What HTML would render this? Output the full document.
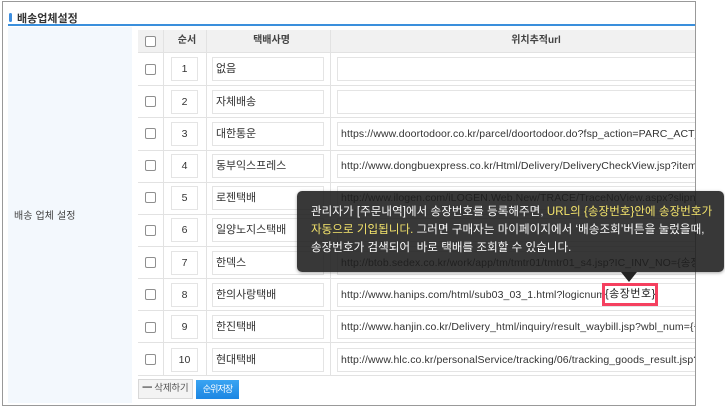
<!DOCTYPE html>
<html><head><meta charset="utf-8">
<style>
html,body{margin:0;padding:0;background:#fff}
#p{position:relative;width:725px;height:406px;overflow:hidden;background:#fff;font-family:"Liberation Sans","Noto Sans CJK KR",sans-serif;color:#333;font-size:11px;filter:blur(.3px)}
#p div{position:absolute;box-sizing:border-box}
.i{background:#fff;border:1px solid #e4e4e4;height:24px;line-height:22px;white-space:nowrap;overflow:hidden}
.s{left:171px;width:27px;text-align:center;font-size:10.5px}
.n{left:212px;width:112px;padding-left:3px;font-size:11px;letter-spacing:-.1px}
.u{left:337px;width:358px;padding-left:3px;font-size:10.5px;letter-spacing:.1px;border-right:0}
.c{left:145px;width:11px;height:11px;border:1px solid #8f8f8f;border-radius:2px;background:#fff}
.l{left:138px;width:557px;height:1px;background:#e2e2e2}
.t{line-height:22px;height:22px;top:30px;text-align:center;font-size:10px;color:#444;font-weight:bold}
.m{left:14px;width:420px;color:#fff;font-size:11.5px;line-height:20px;white-space:nowrap;letter-spacing:.07px}
.m span{color:#f4e46c}
</style></head><body>
<div id="p">
<div style="left:2px;top:1px;width:694px;height:405px;border:1px solid #999"></div>
<div style="left:9px;top:13px;width:3px;height:9px;background:#3d8ee0;border-radius:2px"></div>
<div style="left:17px;top:10px;font-size:11px;font-weight:bold;color:#333;white-space:nowrap">배송업체설정</div>
<div style="left:8px;top:24px;width:687px;height:2px;background:#3a8fdc"></div>
<div style="left:8px;top:27px;width:124px;height:376px;background:#f3f8fd"></div>
<div style="left:14px;top:207px;font-size:10px;color:#444;white-space:nowrap;letter-spacing:.1px">배송 업체 설정</div>

<div style="left:138px;top:30px;width:557px;height:23px;background:#f1f1f1;border-bottom:1px solid #e2e2e2"></div>
<div style="left:163px;top:30px;width:1px;height:345px;background:#e2e2e2"></div>
<div style="left:206px;top:30px;width:1px;height:345px;background:#e2e2e2"></div>
<div style="left:330px;top:30px;width:1px;height:345px;background:#e2e2e2"></div>

<div class="c" style="top:36px"></div>
<div class="t" style="left:166px;width:42px">순서</div>
<div class="t" style="left:210px;width:123px">택배사명</div>
<div class="t" style="left:354px;width:364px">위치추적url</div>

<div class="l" style="top:85px"></div><div class="l" style="top:117px"></div><div class="l" style="top:150px"></div><div class="l" style="top:182px"></div><div class="l" style="top:214px"></div><div class="l" style="top:246px"></div><div class="l" style="top:278px"></div><div class="l" style="top:310px"></div><div class="l" style="top:342px"></div><div class="l" style="top:375px"></div>

<div class="c" style="top:64px"></div><div class="i s" style="top:57px">1</div><div class="i n" style="top:57px">없음</div><div class="i u" style="top:57px"></div>
<div class="c" style="top:96px"></div><div class="i s" style="top:90px">2</div><div class="i n" style="top:90px">자체배송</div><div class="i u" style="top:90px"></div>
<div class="c" style="top:128px"></div><div class="i s" style="top:122px">3</div><div class="i n" style="top:122px">대한통운</div><div class="i u" style="top:122px">https://www.doortodoor.co.kr/parcel/doortodoor.do?fsp_action=PARC_ACT_002</div>
<div class="c" style="top:160px"></div><div class="i s" style="top:154px">4</div><div class="i n" style="top:154px">동부익스프레스</div><div class="i u" style="top:154px">http://www.dongbuexpress.co.kr/Html/Delivery/DeliveryCheckView.jsp?item_no</div>
<div class="c" style="top:192px"></div><div class="i s" style="top:186px">5</div><div class="i n" style="top:186px">로젠택배</div><div class="i u" style="top:186px">http://www.ilogen.com/iLOGEN.Web.New/TRACE/TraceNoView.aspx?slipno</div>
<div class="c" style="top:225px"></div><div class="i s" style="top:218px">6</div><div class="i n" style="top:218px">일양노지스택배</div><div class="i u" style="top:218px"></div>
<div class="c" style="top:257px"></div><div class="i s" style="top:251px">7</div><div class="i n" style="top:251px">한덱스</div><div class="i u" style="top:251px">http://btob.sedex.co.kr/work/app/tm/tmtr01/tmtr01_s4.jsp?IC_INV_NO={송장번호}</div>
<div class="c" style="top:289px"></div><div class="i s" style="top:283px">8</div><div class="i n" style="top:283px">한의사랑택배</div><div class="i u" style="top:283px">http://www.hanips.com/html/sub03_03_1.html?logicnum=</div>
<div class="c" style="top:322px"></div><div class="i s" style="top:315px">9</div><div class="i n" style="top:315px">한진택배</div><div class="i u" style="top:315px">http://www.hanjin.co.kr/Delivery_html/inquiry/result_waybill.jsp?wbl_num={송장번호}</div>
<div class="c" style="top:354px"></div><div class="i s" style="top:348px">10</div><div class="i n" style="top:348px">현대택배</div><div class="i u" style="top:348px">http://www.hlc.co.kr/personalService/tracking/06/tracking_goods_result.jsp?InvNo</div>

<div style="left:138px;top:379px;width:55px;height:20px;background:#f3f3f3;border:1px solid #d8d8d8;line-height:18px;text-align:center;font-size:9.5px;color:#555;white-space:nowrap;letter-spacing:-.2px"><b style="color:#444">━</b> 삭제하기</div>
<div style="left:196px;top:380px;width:43px;height:19px;background:linear-gradient(#3aa4f2,#1c86e2);line-height:18px;text-align:center;font-size:9px;color:#fff;white-space:nowrap;letter-spacing:-.9px">순위저장</div>

<div style="left:297px;top:191px;width:427px;height:81px;background:rgba(28,28,28,.88);border-radius:5px;box-shadow:0 1px 3px rgba(0,0,0,.35)">
<div class="m" style="top:11px">관리자가 [주문내역]에서 송장번호를 등록해주면, <span>URL의 {송장번호}안에 송장번호가</span></div>
<div class="m" style="top:29px"><span>자동으로 기입됩니다.</span> 그러면 구매자는 마이페이지에서 ‘배송조회’버튼을 눌렀을때,</div>
<div class="m" style="top:47px">송장번호가 검색되어&nbsp; 바로 택배를 조회할 수 있습니다.</div>
</div>
<div style="left:621px;top:272px;width:0;height:0;border-left:8px solid transparent;border-right:8px solid transparent;border-top:10px solid #242424"></div>

<div style="left:602px;top:283px;width:56px;height:23px;background:#fff;border:3px solid #f5405f;text-align:center;line-height:17px;font-size:11px;color:#222;white-space:nowrap;letter-spacing:.5px">{송장번호}</div>
</div>
</body></html>
